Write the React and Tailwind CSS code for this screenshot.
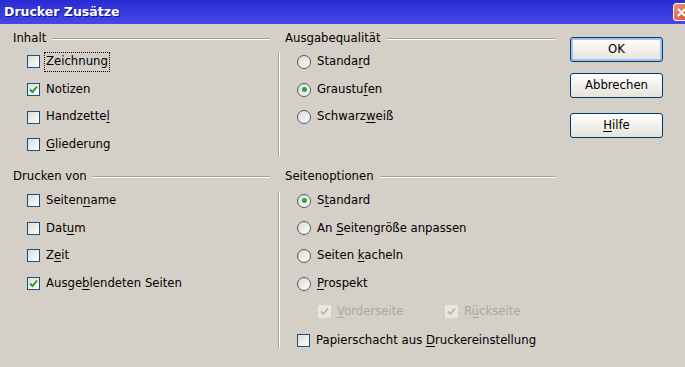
import React from 'react';

const font = { fontFamily: '"DejaVu Sans", Tahoma, sans-serif' };

function U({ children }) {
  return <span className="underline underline-offset-[2px]">{children}</span>;
}

function Check({ checked, disabled }) {
  if (disabled) {
    return (
      <span className="w-[13px] h-[13px] flex items-center justify-center bg-[#e8e6e0]">
        <svg width="9" height="9" viewBox="0 0 9 9"><path d="M1 4.5 L3.5 7 L8 1.5" stroke="#b8b6b0" strokeWidth="1.8" fill="none" /></svg>
      </span>
    );
  }
  return (
    <span className="w-[13px] h-[13px] flex items-center justify-center border border-[#1c5180] bg-gradient-to-br from-[#dcdcd7] to-[#ffffff]">
      {checked && (
        <svg width="9" height="9" viewBox="0 0 9 9"><path d="M1 4.5 L3.5 7 L8 1.5" stroke="#21a121" strokeWidth="1.9" fill="none" /></svg>
      )}
    </span>
  );
}

function Radio({ checked }) {
  return (
    <span className="w-[14px] h-[14px] rounded-full flex items-center justify-center border border-[#4a5a68] bg-gradient-to-br from-[#d8d8d2] to-[#ffffff]">
      {checked && <span className="w-[5px] h-[5px] rounded-full bg-[#2fa52f]" />}
    </span>
  );
}

function Header({ label, className = '' }) {
  return (
    <div className={`h-[17px] flex items-center ${className}`}>
      <span className="text-[11.7px] text-black leading-none">{label}</span>
      <div className="flex-1 ml-[6px] border-t border-[#a0a0a0] border-b border-b-white" />
    </div>
  );
}

function Row({ children }) {
  return <div className="h-[27.7px] flex items-center gap-[6px] text-[11.7px] text-black">{children}</div>;
}

function Button({ children, def, className = '' }) {
  return (
    <div className={`h-[25px] w-[93px] rounded-[3px] border border-[#003c74] bg-gradient-to-b from-[#ffffff] to-[#e6e3da] flex items-center justify-center text-[11.7px] text-black ${def ? 'shadow-[inset_0_0_0_2px_#a8c0f0]' : ''} ${className}`}>
      {children}
    </div>
  );
}

export default function App() {
  return (
    <div className="w-[685px] h-[367px] overflow-hidden bg-[#d4d0c8]" style={font}>
      <div className="h-[24px] flex items-center justify-between bg-gradient-to-b from-[#2a2ad4] to-[#4747e6] pl-[4px]">
        <span className="text-white font-bold text-[12.5px] [text-shadow:1px_1px_0_#10108a]">Drucker Zusätze</span>
        <span className="w-[20px] h-[18px] -mr-[8px] rounded-[3px] border border-white bg-gradient-to-br from-[#f0967a] to-[#d5401e] flex items-center pl-[3px]">
          <svg width="9" height="9" viewBox="0 0 9 9"><path d="M1 1 L8 8 M8 1 L1 8" stroke="white" strokeWidth="2" /></svg>
        </span>
      </div>

      <div className="flex pt-[6px]">
        <div className="flex">
          <div className="w-[257px] ml-[13px]">
            <Header label="Inhalt" />
            <div className="pl-[14px] pt-[1px]">
              <Row><Check /><span className="outline-1 outline-dotted outline-black px-[1px] -ml-[1px]">Zeichnung</span></Row>
              <Row><Check checked /><span>Notizen</span></Row>
              <Row><Check /><span>Handzette<U>l</U></span></Row>
              <Row><Check /><span><U>G</U>liederung</span></Row>
            </div>
            <Header label="Drucken von" className="mt-[10px]" />
            <div className="pl-[14px] pt-[1px]">
              <Row><Check /><span>Seiten<U>n</U>ame</span></Row>
              <Row><Check /><span>Dat<U>u</U>m</span></Row>
              <Row><Check /><span>Z<U>e</U>it</span></Row>
              <Row><Check checked /><span>Ausge<U>b</U>lendeten Seiten</span></Row>
            </div>
          </div>

          <div className="w-[277px] ml-[8px]">
            <Header label="Ausgabequalität" className="pl-[7px]" />
            <div className="flex pt-[1px]">
              <div className="w-[2px] border-l border-[#a0a0a0] border-r border-r-white mt-[5px] mb-[3px]" />
              <div className="pl-[17px]">
                <Row><Radio /><span>Standa<U>r</U>d</span></Row>
                <Row><Radio checked /><span>Graustu<U>f</U>en</span></Row>
                <Row><Radio /><span>Schwarz<U>w</U>eiß</span></Row>
                <div className="h-[27.7px]" />
              </div>
            </div>
            <Header label="Seitenoptionen" className="pl-[7px] mt-[10px]" />
            <div className="flex pt-[1px]">
              <div className="w-[2px] border-l border-[#a0a0a0] border-r border-r-white mt-[5px] mb-[5px]" />
              <div className="pl-[17px]">
                <Row><Radio checked /><span>S<U>t</U>andard</span></Row>
                <Row><Radio /><span>An <U>S</U>eitengröße anpassen</span></Row>
                <Row><Radio /><span>Seiten <U>k</U>acheln</span></Row>
                <Row><Radio /><span><U>P</U>rospekt</span></Row>
                <div className="h-[29px] flex items-center text-[11.7px] text-[#aca899] pl-[21px]">
                  <div className="w-[127px] flex items-center gap-[6px]"><Check disabled /><span><U>V</U>orderseite</span></div>
                  <div className="flex items-center gap-[6px]"><Check disabled /><span>R<U>ü</U>ckseite</span></div>
                </div>
                <Row><Check /><span>Papierschacht aus <U>D</U>ruckereinstellung</span></Row>
              </div>
            </div>
          </div>
        </div>

        <div className="ml-[15px] pt-[7px] flex flex-col">
          <Button def>OK</Button>
          <Button className="mt-[11px]">Abbrechen</Button>
          <Button className="mt-[15px]"><U>H</U>ilfe</Button>
        </div>
      </div>
    </div>
  );
}
